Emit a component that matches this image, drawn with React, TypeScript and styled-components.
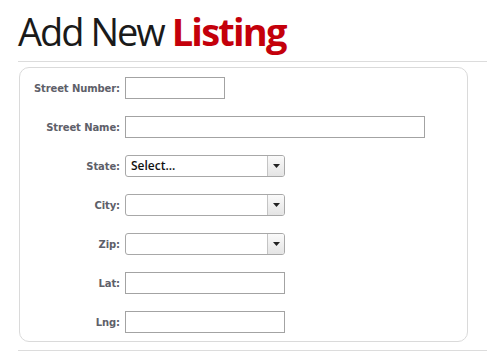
import React from 'react';
import styled, { createGlobalStyle } from 'styled-components';

const GlobalStyle = createGlobalStyle`
  html, body {
    margin: 0;
    padding: 0;
    background: #fff;
  }
  body {
    font-family: "Open Sans", "Liberation Sans", sans-serif;
  }
`;

type Field = {
  label: string;
  kind: 'text' | 'select';
  width: number;
  placeholder?: string;
};

const fields: Field[] = [
  { label: 'Street Number:', kind: 'text', width: 100 },
  { label: 'Street Name:', kind: 'text', width: 300 },
  { label: 'State:', kind: 'select', width: 160, placeholder: 'Select...' },
  { label: 'City:', kind: 'select', width: 160 },
  { label: 'Zip:', kind: 'select', width: 160 },
  { label: 'Lat:', kind: 'text', width: 160 },
  { label: 'Lng:', kind: 'text', width: 160 },
];

function App() {
  return (
    <Page>
      <GlobalStyle />
      <Title>
        Add New <strong>Listing</strong>
      </Title>
      <Rule />
      <FormBox>
        {fields.map((f) => (
          <Row key={f.label}>
            <Label>{f.label}</Label>
            {f.kind === 'text' ? (
              <TextInput $width={f.width} />
            ) : (
              <SelectBox $width={f.width}>
                <SelectValue>{f.placeholder}</SelectValue>
                <SelectButton>
                  <svg width="7" height="4" viewBox="0 0 7 4">
                    <path d="M0 0h7L3.5 4z" fill="#222" />
                  </svg>
                </SelectButton>
              </SelectBox>
            )}
          </Row>
        ))}
      </FormBox>
      <Rule $gap={8} />
    </Page>
  );
}

const Page = styled.div`
  padding: 8px 0 0 18px;
`;

const Title = styled.h1`
  margin: 0;
  font-family: "Open Sans", sans-serif;
  font-weight: 400;
  font-size: 38px;
  line-height: 46px;
  letter-spacing: -2px;
  color: #1a1a1a;
  strong {
    font-weight: 700;
    color: #c4000b;
    letter-spacing: -1.8px;
  }
`;

const Rule = styled.div<{ $gap?: number }>`
  height: 1px;
  background: #dcdcdc;
  margin-top: ${(p) => p.$gap ?? 7}px;
`;

const FormBox = styled.div`
  margin: 5px 0 0 1px;
  width: 447px;
  border: 1px solid #dadada;
  border-radius: 10px;
  padding: 9px 0 8px;
  display: flex;
  flex-direction: column;
  gap: 17px;
`;

const Row = styled.div`
  display: flex;
  align-items: center;
  gap: 5px;
`;

const Label = styled.label`
  width: 100px;
  text-align: right;
  font-family: "DejaVu Sans", Verdana, sans-serif;
  font-weight: 700;
  font-size: 10px;
  letter-spacing: -0.1px;
  color: #5e6069;
`;

const TextInput = styled.input<{ $width: number }>`
  box-sizing: border-box;
  width: ${(p) => p.$width}px;
  height: 22px;
  margin: 0;
  border: 1px solid #a3a3a3;
  border-radius: 0;
  background: #fff;
  outline: none;
`;

const SelectBox = styled.div<{ $width: number }>`
  box-sizing: border-box;
  width: ${(p) => p.$width}px;
  height: 22px;
  display: flex;
  border: 1px solid #a8a8a8;
  border-radius: 3px;
  background: #fff;
  overflow: hidden;
`;

const SelectValue = styled.div`
  flex: 1;
  padding-left: 5px;
  font-family: "Open Sans", sans-serif;
  font-weight: 600;
  font-size: 12px;
  line-height: 20px;
  color: #111;
`;

const SelectButton = styled.div`
  width: 16px;
  border-left: 1px solid #c4c4c4;
  background: linear-gradient(#fafafa, #e4e4e4);
  display: flex;
  align-items: center;
  justify-content: center;
`;

export default App;
